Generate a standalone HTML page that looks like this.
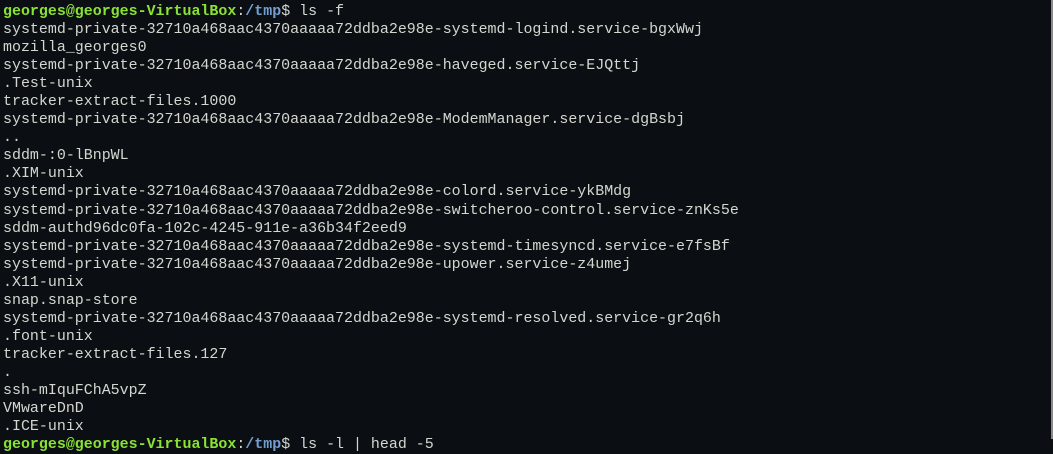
<!DOCTYPE html>
<html><head><style>
html,body{margin:0;padding:0;width:1053px;height:439px;overflow:hidden;background:#0b0f13;}
pre{margin:0;position:absolute;left:3px;top:3px;font-family:"Liberation Mono",monospace;font-size:14.96px;line-height:18.05px;color:#d3d7cf;}
.g{color:#8ae234;font-weight:bold}.b{color:#729fcf;font-weight:bold}
.edge{position:absolute;right:0;top:0;width:2px;height:439px;background:#8a8a8a}
</style></head><body>
<pre><span class="g">georges@georges-VirtualBox</span>:<span class="b">/tmp</span>$ ls -f
systemd-private-32710a468aac4370aaaaa72ddba2e98e-systemd-logind.service-bgxWwj
mozilla_georges0
systemd-private-32710a468aac4370aaaaa72ddba2e98e-haveged.service-EJQttj
.Test-unix
tracker-extract-files.1000
systemd-private-32710a468aac4370aaaaa72ddba2e98e-ModemManager.service-dgBsbj
..
sddm-:0-lBnpWL
.XIM-unix
systemd-private-32710a468aac4370aaaaa72ddba2e98e-colord.service-ykBMdg
systemd-private-32710a468aac4370aaaaa72ddba2e98e-switcheroo-control.service-znKs5e
sddm-authd96dc0fa-102c-4245-911e-a36b34f2eed9
systemd-private-32710a468aac4370aaaaa72ddba2e98e-systemd-timesyncd.service-e7fsBf
systemd-private-32710a468aac4370aaaaa72ddba2e98e-upower.service-z4umej
.X11-unix
snap.snap-store
systemd-private-32710a468aac4370aaaaa72ddba2e98e-systemd-resolved.service-gr2q6h
.font-unix
tracker-extract-files.127
.
ssh-mIquFChA5vpZ
VMwareDnD
.ICE-unix
<span class="g">georges@georges-VirtualBox</span>:<span class="b">/tmp</span>$ ls -l | head -5</pre>
<div class="edge"></div>
</body></html>
